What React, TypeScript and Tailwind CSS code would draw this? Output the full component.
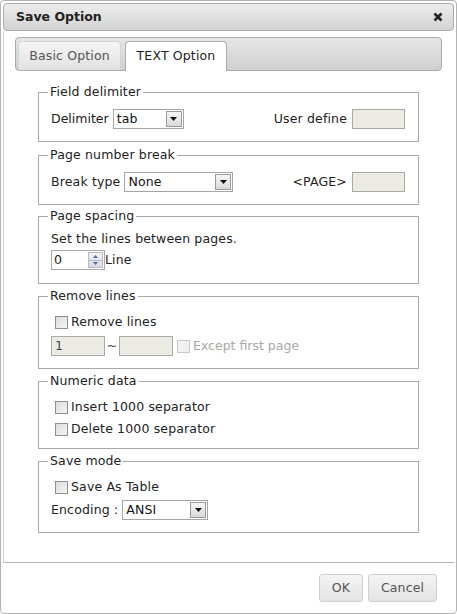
import React from "react";

const font = { fontFamily: '"DejaVu Sans", Verdana, sans-serif' };

function SelectBox({ value, width }: { value: string; width: string }) {
  return (
    <div
      className={`flex h-[20px] items-center border border-[#a5a5a5] bg-white pl-[3px] pr-[1px] ${width}`}
    >
      <span className="flex-1 leading-none text-[#111]">{value}</span>
      <span className="flex h-[16px] w-[16px] items-center justify-center border border-[#9a9a9a] bg-gradient-to-b from-[#f6f6f6] to-[#d9d9d9]">
        <svg width="7" height="4" viewBox="0 0 7 4">
          <path d="M0 0h7L3.5 4z" fill="#111" />
        </svg>
      </span>
    </div>
  );
}

function Check({ label, disabled }: { label: string; disabled?: boolean }) {
  return (
    <label className="flex h-[18px] items-center gap-[3px] pl-[4px]">
      <span
        className={`h-[13px] w-[13px] shrink-0 border bg-gradient-to-br ${
          disabled
            ? "border-[#c8c8c8] from-[#f4f4f4] to-[#ececec]"
            : "border-[#8e8e8e] from-[#dcdcdc] to-[#f5f5f5]"
        }`}
      />
      <span className={disabled ? "text-[#a8a8a8]" : "text-[#222]"}>{label}</span>
    </label>
  );
}

function Group({
  title,
  className,
  children,
}: {
  title: string;
  className: string;
  children: React.ReactNode;
}) {
  return (
    <fieldset
      className={`ml-[34px] w-[381px] border border-[#a9a9a9] pl-[12px] pr-[13px] ${className}`}
    >
      <legend className="-ml-[3px] px-[2px] leading-[14px] text-[#222]">{title}</legend>
      {children}
    </fieldset>
  );
}

export default function App() {
  return (
    <div
      style={font}
      className="flex h-[614px] w-[457px] flex-col rounded-[4px] border border-[#b3b3b3] bg-white text-[12.5px] tracking-[0.15px] text-[#222]"
    >
      <div className="mx-[2px] mt-[2px] flex h-[28px] items-center justify-between rounded-[4px] border border-[#aaaaaa] bg-gradient-to-b from-[#ececec] to-[#d3d3d3] pl-[12px] pr-[10px]">
        <span className="font-bold tracking-normal text-[#222]">Save Option</span>
        <svg width="10" height="10" viewBox="0 0 10 10">
          <path d="M1.5 1.5l7 7M8.5 1.5l-7 7" stroke="#222" strokeWidth="2.6" />
        </svg>
      </div>

      <div className="ml-[2px] flex-1 border-l border-[#d0d0d0]">
        <div className="ml-[11px] mt-[6px] flex h-[34px] w-[427px] items-end gap-[4px] rounded-[4px] border border-[#aaaaaa] bg-gradient-to-b from-[#e6e6e6] to-[#d0d0d0] pl-[2px]">
          <div className="flex h-[29px] w-[103px] items-center justify-center rounded-t-[4px] border border-b-0 border-[#d3d3d3] bg-gradient-to-b from-[#f4f4f4] to-[#e2e2e2] text-[#555]">
            Basic Option
          </div>
          <div className="-mb-px flex h-[30px] w-[102px] items-center justify-center rounded-t-[4px] border border-b-0 border-[#aaaaaa] bg-white text-[#222]">
            TEXT Option
          </div>
        </div>

        <Group title="Field delimiter" className="mt-[14px] pt-[10px] pb-[12px]">
          <div className="flex items-center">
            <span className="mr-[4px] tracking-normal">Delimiter</span>
            <SelectBox value="tab" width="w-[71px]" />
            <span className="ml-auto mr-[5px]">User define</span>
            <span className="h-[20px] w-[53px] border border-[#a9a9a9] bg-[#ebebe4]" />
          </div>
        </Group>

        <Group title="Page number break" className="mt-[6px] pt-[10px] pb-[12px]">
          <div className="flex items-center">
            <span className="mr-[4px]">Break type</span>
            <SelectBox value="None" width="w-[109px]" />
            <span className="ml-auto mr-[5px]">&lt;PAGE&gt;</span>
            <span className="h-[20px] w-[53px] border border-[#a9a9a9] bg-[#ebebe4]" />
          </div>
        </Group>

        <Group title="Page spacing" className="mt-[4px] pt-[8px] pb-[13px]">
          <div className="leading-[16px]">Set the lines between pages.</div>
          <div className="mt-[3px] flex items-center">
            <div className="flex h-[20px] w-[54px] items-center border border-[#a9a9a9] bg-white pl-[2px] pr-[1px]">
              <span className="flex-1">0</span>
              <span className="flex h-[16px] w-[15px] flex-col border border-[#b8b8c8] bg-gradient-to-b from-[#f2f2f6] to-[#dadae2]">
                <span className="flex flex-1 items-center justify-center border-b border-[#b8b8c8]">
                  <svg width="5" height="3" viewBox="0 0 5 3">
                    <path d="M0 3L2.5 0 5 3z" fill="#5a6aa0" />
                  </svg>
                </span>
                <span className="flex flex-1 items-center justify-center">
                  <svg width="5" height="3" viewBox="0 0 5 3">
                    <path d="M0 0h5L2.5 3z" fill="#5a6aa0" />
                  </svg>
                </span>
              </span>
            </div>
            <span>Line</span>
          </div>
        </Group>

        <Group title="Remove lines" className="mt-[5px] pt-[10px] pb-[12px]">
          <Check label="Remove lines" />
          <div className="mt-[5px] flex items-center">
            <span className="flex h-[20px] w-[54px] items-center border border-[#a9a9a9] bg-[#ebebe4] pl-[3px] text-[#444]">
              1
            </span>
            <span className="mx-[1px] w-[12px] text-center text-[#444]">~</span>
            <span className="h-[20px] w-[54px] border border-[#a9a9a9] bg-[#ebebe4]" />
            <div className="tracking-normal">
              <Check label="Except first page" disabled />
            </div>
          </div>
        </Group>

        <Group title="Numeric data" className="mt-[5px] pt-[10px] pb-[10px]">
          <Check label="Insert 1000 separator" />
          <div className="mt-[4px]">
            <Check label="Delete 1000 separator" />
          </div>
        </Group>

        <Group title="Save mode" className="mt-[5px] pt-[10px] pb-[12px]">
          <Check label="Save As Table" />
          <div className="mt-[4px] flex items-center">
            <span className="mr-[4px]">Encoding :</span>
            <SelectBox value="ANSI" width="w-[86px]" />
          </div>
        </Group>
      </div>

      <div className="mx-[2px] flex h-[51px] items-center justify-end gap-[5px] border-t border-[#b5b5b5] pr-[17px]">
        <button className="h-[28px] w-[44px] rounded-[3px] border border-[#cfcfcf] bg-gradient-to-b from-[#f4f4f4] to-[#e3e3e3] text-[#555]">
          OK
        </button>
        <button className="h-[28px] w-[69px] rounded-[3px] border border-[#cfcfcf] bg-gradient-to-b from-[#f4f4f4] to-[#e3e3e3] text-[#555]">
          Cancel
        </button>
      </div>
    </div>
  );
}
